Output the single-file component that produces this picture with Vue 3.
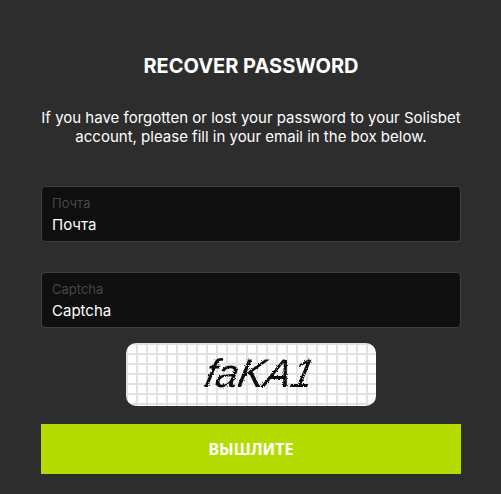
<template>
  <section class="recover">
    <h2 class="title">RECOVER PASSWORD</h2>
    <p class="intro">
      If you have forgotten or lost your password to your Solisbet account, please fill in your email in the box below.
    </p>
    <form class="form" @submit.prevent>
      <label v-for="field in fields" :key="field" class="field">
        <span class="field-label">{{ field }}</span>
        <input class="field-input" type="text" :placeholder="field" />
      </label>
      <div class="captcha">
        <svg width="250" height="63" viewBox="0 0 250 63">
          <defs>
            <filter id="rough" x="-10%" y="-10%" width="120%" height="120%">
              <feTurbulence type="fractalNoise" baseFrequency="0.8" numOctaves="2" seed="4" />
              <feDisplacementMap in="SourceGraphic" scale="3" />
            </filter>
          </defs>
          <g filter="url(#rough)">
            <text class="captcha-text" transform="translate(77 44) skewX(-12)" textLength="108">faKA1</text>
          </g>
        </svg>
      </div>
      <button class="submit" type="submit">ВЫШЛИТЕ</button>
    </form>
  </section>
</template>

<script setup>
const fields = ["Почта", "Captcha"];
</script>

<style scoped>
.recover {
  box-sizing: border-box;
  width: 501px;
  height: 494px;
  padding: 54px 40px 0 41px;
  background: #2d2d2d;
  color: #fff;
  font-family: Inter, "Noto Sans", sans-serif;
}

.title {
  margin: 0;
  font-size: 20px;
  line-height: 24px;
  font-weight: 700;
  text-align: center;
  white-space: nowrap;
}

.intro {
  margin: 30px -4px 0;
  font-size: 15px;
  line-height: 19px;
  text-align: center;
}

.form {
  display: flex;
  flex-direction: column;
  margin-top: 40px;
}

.field {
  box-sizing: border-box;
  display: flex;
  flex-direction: column;
  height: 56px;
  margin-bottom: 30px;
  padding: 9px 10px 0;
  background: #0f0f0f;
  border: 1px solid #404040;
  border-radius: 4px;
}

.field:nth-of-type(2) {
  margin-bottom: 15px;
}

.field-label {
  font-size: 13px;
  line-height: 14px;
  color: #43474d;
}

.field-input {
  margin-top: 6px;
  padding: 0;
  border: 0;
  outline: 0;
  background: transparent;
  color: #fff;
  font: 15px/18px Inter, "Noto Sans", sans-serif;
}

.field-input::placeholder {
  color: #fff;
  opacity: 1;
}

.captcha {
  align-self: center;
  width: 250px;
  height: 63px;
  border-radius: 10px;
  overflow: hidden;
  background-color: #fff;
  background-image:
    linear-gradient(#e2e2e2 2px, transparent 2px),
    linear-gradient(90deg, #e2e2e2 2px, transparent 2px);
  background-size: 10px 10px;
  background-position: 0 0;
}

.captcha svg {
  display: block;
}

.captcha-text {
  font-family: "Liberation Sans", sans-serif;
  font-style: italic;
  font-size: 40px;
  fill: #111;
}

.submit {
  height: 50px;
  margin-top: 18px;
  border: 0;
  background: #b4dc00;
  color: #fff;
  font: 700 16px "Noto Sans", sans-serif;
}
</style>

<style>
body {
  background: #2d2d2d;
}
</style>
